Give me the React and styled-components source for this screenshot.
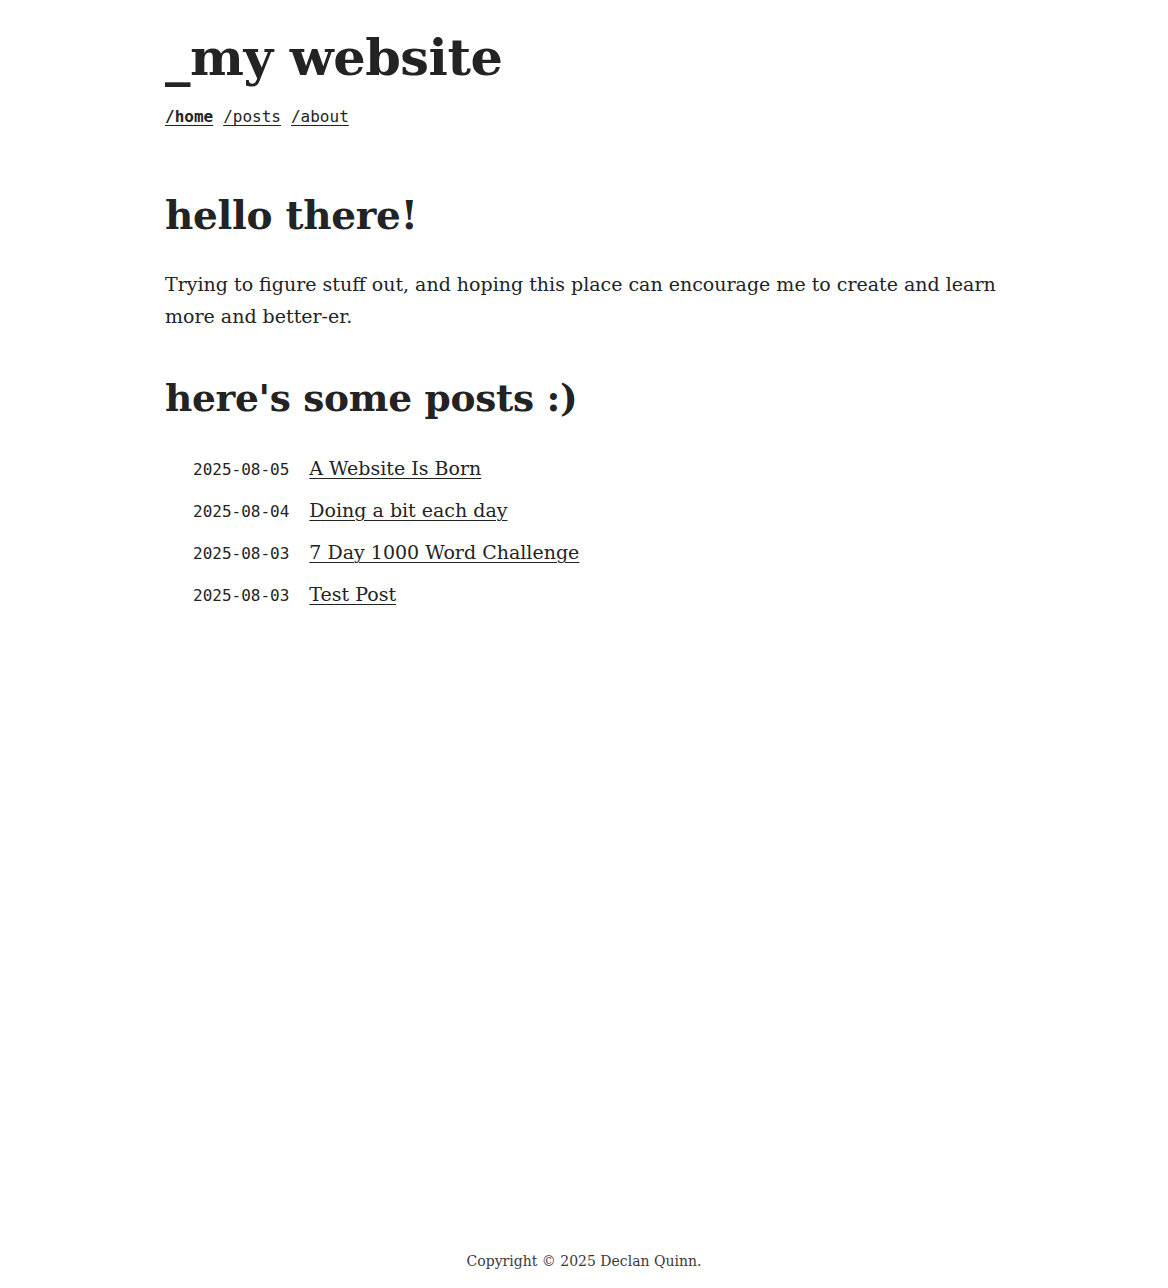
import React from 'react';
import styled, { createGlobalStyle } from 'styled-components';

const Global = createGlobalStyle`
  html, body {
    margin: 0;
    padding: 0;
    background: #ffffff;
    color: #232323;
    font-family: 'DejaVu Serif', 'Liberation Serif', serif;
  }
`;

const Page = styled.div`
  min-height: 100vh;
  display: flex;
  flex-direction: column;
  align-items: center;
`;

const Main = styled.main`
  width: 838px;
  flex: 1;
`;

const Header = styled.header`
  padding-top: 22px;
`;

const SiteTitle = styled.div`
  font-size: 51px;
  font-weight: bold;
  line-height: 70px;
  letter-spacing: -0.5px;
`;

const Nav = styled.nav`
  display: flex;
  gap: 10px;
  margin-top: 15px;
  font-family: 'DejaVu Sans Mono', 'Liberation Mono', monospace;
  font-size: 16px;
`;

const NavLink = styled.a`
  color: #232323;
  font-weight: ${(p) => (p.active ? 'bold' : 'normal')};
  text-decoration: underline;
  text-underline-offset: 3px;
  cursor: pointer;
`;

const H2 = styled.h2`
  font-size: ${(p) => p.size || '39px'};
  font-weight: bold;
  line-height: 56px;
  margin: ${(p) => p.mt} 0 0;
  letter-spacing: -0.3px;
`;

const Lead = styled.p`
  font-size: 19px;
  line-height: 32px;
  margin: 25px 0 0;
`;

const PostList = styled.ul`
  list-style: none;
  margin: 26px 0 0;
  padding: 0 0 0 28px;
  display: flex;
  flex-direction: column;
  gap: 10px;
`;

const PostRow = styled.li`
  display: flex;
  align-items: baseline;
  gap: 20px;
  height: 32px;
  line-height: 32px;
`;

const PostDate = styled.span`
  font-family: 'DejaVu Sans Mono', 'Liberation Mono', monospace;
  font-size: 16px;
`;

const PostLink = styled.a`
  color: #232323;
  font-size: 19px;
  text-decoration: underline;
  text-underline-offset: 3px;
  text-decoration-thickness: 1px;
`;

const Footer = styled.footer`
  font-size: 14px;
  color: #3a3a3a;
  padding: 0 0 19px;
  text-align: center;
`;

const posts = [
  { date: '2025-08-05', title: 'A Website Is Born' },
  { date: '2025-08-04', title: 'Doing a bit each day' },
  { date: '2025-08-03', title: '7 Day 1000 Word Challenge' },
  { date: '2025-08-03', title: 'Test Post' },
];

export default function App() {
  return (
    <Page>
      <Global />
      <Main>
        <Header>
          <SiteTitle>_my website</SiteTitle>
          <Nav>
            <NavLink active>/home</NavLink>
            <NavLink>/posts</NavLink>
            <NavLink>/about</NavLink>
          </Nav>
        </Header>
        <H2 mt="61px">hello there!</H2>
        <Lead>
          Trying to figure stuff out, and hoping this place can encourage me to
          create and learn more and better-er.
        </Lead>
        <H2 mt="38px" size="37.5px">here's some posts :)</H2>
        <PostList>
          {posts.map((p, i) => (
            <PostRow key={i}>
              <PostDate>{p.date}</PostDate>
              <PostLink>{p.title}</PostLink>
            </PostRow>
          ))}
        </PostList>
      </Main>
      <Footer>Copyright © 2025 Declan Quinn.</Footer>
    </Page>
  );
}
